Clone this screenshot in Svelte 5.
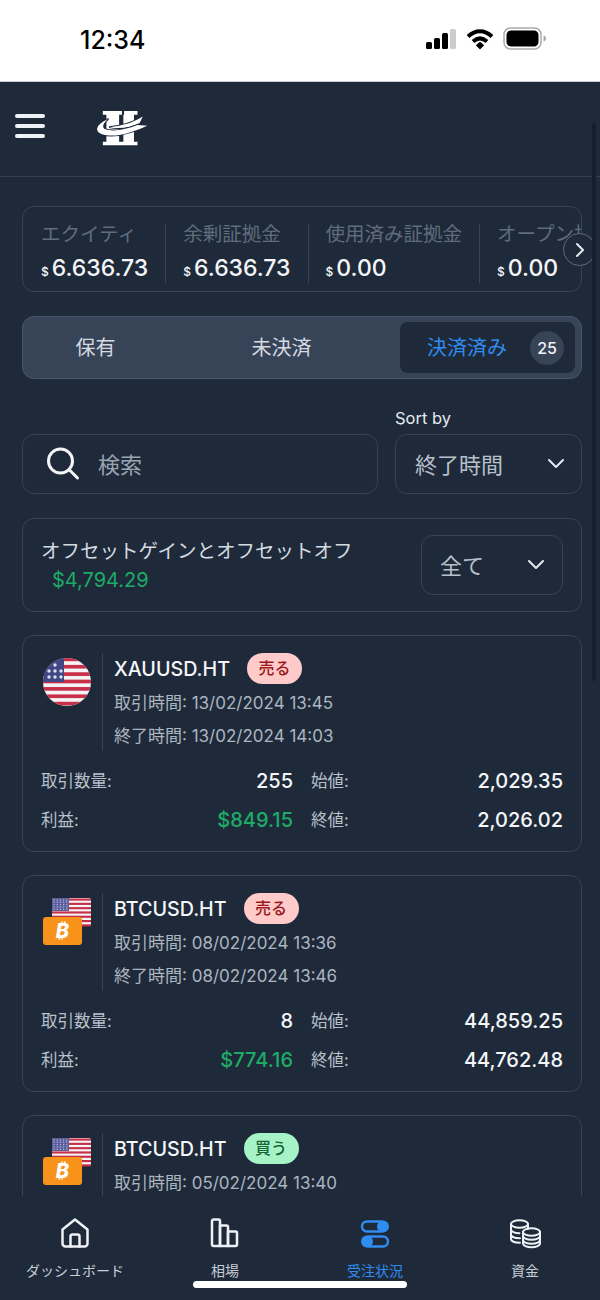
<script>
  const stats = [
    { label: 'エクイティ', value: '6.636.73' },
    { label: '余剰証拠金', value: '6.636.73' },
    { label: '使用済み証拠金', value: '0.00' },
    { label: 'オープン損益', value: '0.00' }
  ];
  const orders = [
    { sym: 'XAUUSD.HT', side: '売る', sell: true, flag: 'us', open: '13/02/2024 13:45', close: '13/02/2024 14:03', qty: '255', profit: '$849.15', o: '2,029.35', c: '2,026.02' },
    { sym: 'BTCUSD.HT', side: '売る', sell: true, flag: 'btc', open: '08/02/2024 13:36', close: '08/02/2024 13:46', qty: '8', profit: '$774.16', o: '44,859.25', c: '44,762.48' },
    { sym: 'BTCUSD.HT', side: '買う', sell: false, flag: 'btc', open: '05/02/2024 13:40', close: '05/02/2024 13:52', qty: '8', profit: '$700.10', o: '42,859.25', c: '42,762.48' }
  ];
  const stripes = [0, 1, 2, 3, 4, 5, 6];
  const stars = [[6, 13], [12, 7], [18, 13], [6, 19], [12, 19], [18, 19], [12, 13]];
  const dots = [0, 1, 2, 3, 4];
  const navs = [
    { label: 'ダッシュボード', icon: 'home' },
    { label: '相場', icon: 'bars' },
    { label: '受注状況', icon: 'toggle', active: true },
    { label: '資金', icon: 'coins' }
  ];
</script>

<div class="phone">
  <div class="status">
    <span class="time">12:34</span>
    <div class="status-icons">
      <svg width="32" height="20" viewBox="0 0 32 20">
        <rect x="1" y="13" width="6" height="7" rx="1.500" fill="#000" />
        <rect x="9" y="9" width="6" height="11" rx="1.500" fill="#000" />
        <rect x="17" y="4" width="6" height="16" rx="1.500" fill="#000" />
        <rect x="25" y="0" width="6" height="20" rx="1.500" fill="#ccc" />
      </svg>
      <svg width="28" height="22" viewBox="0 0 28 22">
        <path d="M2 8.500C9.500 1.500 18.500 1.500 26 8.500" fill="none" stroke="#000" stroke-width="4" />
        <path d="M7 13.500C11.500 9.500 16.500 9.500 21 13.500" fill="none" stroke="#000" stroke-width="4" />
        <path d="M9.800 17.200 14 13.800 18.200 17.200 14 21.500Z" fill="#000" />
      </svg>
      <svg width="44" height="24" viewBox="0 0 44 24">
        <rect x="1" y="1" width="37" height="21" rx="6.500" fill="none" stroke="#aaa" stroke-width="1.500" />
        <rect x="3.500" y="3.500" width="32" height="16" rx="4.500" fill="#000" />
        <path d="M40.500 8.500c2 .5 2.500 2 2.500 3s-.5 2.500-2.500 3Z" fill="#aaa" />
      </svg>
    </div>
  </div>

  <header class="topbar">
    <button class="burger" aria-label="menu"><i></i><i></i><i></i></button>
    <svg class="logo" width="70" height="51" viewBox="0 0 198 144" aria-label="logo">
      <path fill="#fff" d="M42 28H96V39H88V115H97V125H42V115H52V39H42ZM102 28H140V39H130V115H140V125H90V115H100V39H102Z" />
      <path fill="#fff" stroke="#1e2a3a" stroke-width="5" paint-order="stroke" d="M155 44C130 60 100 70 60 74 92 80 122 74 146 62Z" />
      <path fill="#fff" stroke="#1e2a3a" stroke-width="5" paint-order="stroke" d="M58 50C34 60 20 76 28 86 40 102 85 100 120 88 140 82 155 76 168 70L140 68C110 80 70 88 50 80 38 76 42 62 58 50Z" />
    </svg>
  </header>

  <main class="content">
    <section class="stats">
      <div class="stats-row">
        {#each stats as s}
          <div class="stat">
            <div class="stat-label">{s.label}</div>
            <div class="stat-value"><small>$</small>{s.value}</div>
          </div>
        {/each}
      </div>
      <button class="next" aria-label="next">
        <svg width="12" height="16" viewBox="0 0 12 16"><path d="M3 2l6 6-6 6" fill="none" stroke="#e5e9ef" stroke-width="2" stroke-linecap="round" stroke-linejoin="round" /></svg>
      </button>
    </section>

    <nav class="tabs">
      <div class="tab">保有</div>
      <div class="tab">未決済</div>
      <div class="tab active"><span>決済済み</span><b>25</b></div>
    </nav>

    <div class="filters">
      <div class="search">
        <svg width="34" height="36" viewBox="0 0 34 36"><circle cx="14.500" cy="15" r="12" fill="none" stroke="#f3f5f7" stroke-width="3" /><path d="M23.500 24l8 8" stroke="#f3f5f7" stroke-width="3" stroke-linecap="round" /></svg>
        <span>検索</span>
      </div>
      <div class="sort">
        <label for="sort-box">Sort by</label>
        <div class="select" id="sort-box">
          <span>終了時間</span>
          <svg width="18" height="12" viewBox="0 0 18 12"><path d="M2 2l7 7 7-7" fill="none" stroke="#e5e9ef" stroke-width="2" stroke-linecap="round" stroke-linejoin="round" /></svg>
        </div>
      </div>
    </div>

    <section class="offset">
      <div class="offset-text">
        <div class="offset-label">オフセットゲインとオフセットオフ</div>
        <div class="offset-value">$4,794.29</div>
      </div>
      <div class="select small">
        <span>全て</span>
        <svg width="18" height="12" viewBox="0 0 18 12"><path d="M2 2l7 7 7-7" fill="none" stroke="#e5e9ef" stroke-width="2" stroke-linecap="round" stroke-linejoin="round" /></svg>
      </div>
    </section>

    {#each orders as o}
      <article class="card">
        <div class="card-head">
          <div class="flag">
            {#if o.flag === 'us'}
              <svg width="48" height="48" viewBox="0 0 48 48">
                <defs><clipPath id="round"><circle cx="24" cy="24" r="24" /></clipPath></defs>
                <g clip-path="url(#round)">
                  <rect width="48" height="48" fill="#f4f4f6" />
                  {#each stripes as i}<rect y={i * 7.380 - 0.500} width="48" height="3.700" fill="#c8304a" />{/each}
                  <rect width="21" height="24" fill="#3f4785" />
                  <g fill="#dfe0ee">
                    {#each stars as p}<circle cx={p[0]} cy={p[1]} r="1.700" />{/each}
                  </g>
                </g>
              </svg>
            {:else}
              <svg width="48" height="48" viewBox="0 0 48 48">
                <rect x="9" y="0" width="39" height="28" rx="2" fill="#f4f4f6" />
                {#each stripes as i}<rect x="9" y={i * 4.300 + 0.500} width="39" height="2.150" fill="#c8304a" />{/each}
                <rect x="9" y="0" width="17" height="13" fill="#5a5f9c" />
                <g fill="#b9bbdc">
                  {#each dots as d}{#each dots as e}<circle cx={11 + d * 3.200} cy={2 + e * 2.300} r="0.700" />{/each}{/each}
                </g>
                <rect x="0" y="19" width="39" height="28" rx="3" fill="#f7931a" />
                <text x="19.500" y="40" text-anchor="middle" font-family="Inter" font-style="italic" font-weight="800" font-size="20" fill="#fff">₿</text>
              </svg>
            {/if}
          </div>
          <div class="info">
            <div class="title"><span>{o.sym}</span><em class:sell={o.sell}>{o.side}</em></div>
            <div class="line">取引時間: {o.open}</div>
            <div class="line">終了時間: {o.close}</div>
          </div>
        </div>
        <div class="grid">
          <span class="k">取引数量:</span><span class="v">{o.qty}</span><span class="k">始値:</span><span class="v">{o.o}</span>
          <span class="k">利益:</span><span class="v green">{o.profit}</span><span class="k">終値:</span><span class="v">{o.c}</span>
        </div>
      </article>
    {/each}
  </main>

  <footer class="bottom">
    {#each navs as n}
      <div class="nav" class:on={n.active}>
        <svg width="34" height="34" viewBox="0 0 34 34" fill="none" stroke="currentColor" stroke-width="2.500" stroke-linecap="round" stroke-linejoin="round">
          {#if n.icon === 'home'}
            <path d="M4.500 13.500 17 3.500l12.500 10v14a3 3 0 0 1-3 3h-19a3 3 0 0 1-3-3Z" />
            <path d="M12.500 30.500V20.500a2 2 0 0 1 2-2h5a2 2 0 0 1 2 2v10" />
          {:else if n.icon === 'bars'}
            <path d="M4 5a1.500 1.500 0 0 1 1.500-1.500h5A1.500 1.500 0 0 1 12 5v25H5.500A1.500 1.500 0 0 1 4 28.500Z" />
            <path d="M12 9.500h6.500A1.500 1.500 0 0 1 20 11v19h-8Z" />
            <path d="M20 15.500h7.500A1.500 1.500 0 0 1 29 17v11.500a1.500 1.500 0 0 1-1.500 1.500H20Z" />
          {:else if n.icon === 'toggle'}
            <g stroke="#2f8cf0" stroke-width="2.400">
              <rect x="4" y="5.500" width="24" height="10" rx="5" />
              <rect x="6" y="20.500" width="24" height="10" rx="5" />
            </g>
            <circle cx="25" cy="10.500" r="6" fill="#2f8cf0" stroke="none" />
            <circle cx="9" cy="25.500" r="6" fill="#2f8cf0" stroke="none" />
          {:else}
            <g stroke-width="2">
              <ellipse cx="11.500" cy="8" rx="8.500" ry="3.800" />
              <path d="M3 8v15c0 2 3.500 3.700 9 3.700M3 13.500c0 2 3.500 3.700 8.500 3.700M3 18.500c0 2 3.500 3.700 9 3.700M20 8v5" />
              <ellipse cx="23.500" cy="16" rx="8.500" ry="3.800" />
              <path d="M15 16v11.500c0 2 3.500 3.700 8.500 3.700S32 29.500 32 27.500V16M15 20c0 2 3.500 3.700 8.500 3.700S32 22 32 20M15 24c0 2 3.500 3.700 8.500 3.700S32 26 32 24" />
            </g>
          {/if}
        </svg>
        <span>{n.label}</span>
      </div>
    {/each}
    <div class="indicator"></div>
  </footer>

  <div class="scrollbar"></div>
</div>

<style>
  :global(body) { margin: 0; background: #1e2a3a; }
  * { box-sizing: border-box; }
  .phone {
    position: relative;
    width: 600px;
    height: 1300px;
    overflow: hidden;
    display: flex;
    flex-direction: column;
    background: #1e2a3a;
    color: #fff;
    font-family: Inter, "Noto Sans CJK JP", sans-serif;
  }
  .status {
    flex: none;
    height: 82px;
    background: #fff;
    display: flex;
    align-items: center;
    justify-content: space-between;
    padding: 0 53px 0 80px;
    border-bottom: 1px solid #c9ced6;
  }
  .time { color: #000; font-size: 25px; font-weight: 500; margin-top: -2px; }
  .status-icons { display: flex; align-items: center; gap: 9px; margin-top: -3px; }
  .topbar {
    flex: none;
    height: 95px;
    border-bottom: 1px solid #344052;
    display: flex;
    align-items: center;
    padding: 0 0 6px 15px;
    gap: 43px;
  }
  .burger { background: none; border: 0; padding: 0; width: 30px; display: flex; flex-direction: column; gap: 5.500px; }
  .burger i { display: block; height: 4.500px; border-radius: 3px; background: #eef1f5; }
  .content {
    flex: 1;
    min-height: 0;
    overflow: hidden;
    padding: 29px 18px 0 22px;
    display: flex;
    flex-direction: column;
  }
  .stats {
    position: relative;
    flex: none;
    height: 86px;
    border: 1px solid #374455;
    border-radius: 12px;
  }
  .stats-row { display: flex; height: 100%; overflow: hidden; padding: 17px 0 0 18px; border-radius: 12px; }
  .stat { flex: none; height: 59px; padding-right: 17px; margin-right: 17px; border-right: 1px solid #374455; }
  .stat:last-child { border: 0; margin: 0; padding: 0; }
  .stat-label { font-size: 19.500px; line-height: 21px; color: #5f6c7e; white-space: nowrap; }
  .stat-value { font-size: 23px; line-height: 28px; margin-top: 9px; font-weight: 500; color: #f4f6f8; white-space: nowrap; }
  .stat-value small { font-size: 12px; margin-right: 3px; }
  .next {
    position: absolute;
    right: -15px;
    top: 26px;
    width: 33px;
    height: 33px;
    border-radius: 50%;
    border: 1px solid #5f6c7e;
    background: #1e2a3a;
    display: flex;
    align-items: center;
    justify-content: center;
    padding: 0;
  }
  .tabs {
    flex: none;
    margin-top: 24px;
    height: 63px;
    background: #374457;
    border: 1px solid #4a586b;
    border-radius: 12px;
    padding: 5px 6px 5px 5px;
    display: grid;
    grid-template-columns: 135px 1fr 175px;
    font-size: 20px;
    color: #d5dae1;
  }
  .tab { display: flex; align-items: center; justify-content: center; padding-bottom: 3px; }
  .tab.active { background: #1e2a3a; border-radius: 8px; color: #2f8cf0; justify-content: flex-start; padding: 0 11px 3px 27px; }
  .tab.active span { flex: 1; }
  .tab.active b { width: 34px; height: 34px; margin-top: 3px; border-radius: 50%; background: #374457; color: #eef1f5; font-size: 16px; font-weight: 500; display: flex; align-items: center; justify-content: center; }
  .filters { flex: none; display: flex; align-items: flex-end; gap: 17px; margin-top: 29px; }
  .search {
    width: 356px;
    height: 60px;
    border: 1px solid #374455;
    border-radius: 12px;
    display: flex;
    align-items: center;
    gap: 18px;
    padding-left: 23px;
    font-size: 22px;
    color: #9aa4b1;
  }
  .search span { margin-bottom: 3px; }
  .sort { flex: 1; }
  .sort label { display: block; font-size: 16.500px; line-height: 20px; margin-bottom: 6px; color: #e5e9ef; }
  .select {
    height: 60px;
    border: 1px solid #374455;
    border-radius: 12px;
    display: flex;
    align-items: center;
    justify-content: space-between;
    padding: 0 16px 0 19px;
    font-size: 22px;
    color: #b8c0cb;
  }
  .select span { margin-bottom: 3px; }
  .offset {
    flex: none;
    margin-top: 24px;
    height: 94px;
    border: 1px solid #374455;
    border-radius: 12px;
    display: flex;
    align-items: center;
    justify-content: space-between;
    padding: 0 18px;
  }
  .offset-label { font-size: 19.500px; line-height: 24px; color: #d5dae1; }
  .offset-value { font-size: 20px; line-height: 24px; margin: 5px 0 0 11px; color: #1dac68; }
  .select.small { width: 142px; padding: 0 17px 0 18px; }
  .card {
    flex: none;
    height: 217px;
    margin-top: 23px;
    border: 1px solid #374455;
    border-radius: 12px;
    padding: 17px 18px 0;
  }
  .card-head { display: flex; height: 98px; }
  .flag { flex: none; width: 62px; border-right: 1px solid #374455; padding: 5px 0 0 2px; margin-right: 11px; height: 98px; }
  .title { display: flex; align-items: center; gap: 17px; height: 31px; font-size: 19.700px; font-weight: 500; color: #f4f6f8; }
  .title em { font-style: normal; font-size: 16px; font-weight: 500; width: 55px; height: 31px; padding-bottom: 3px; border-radius: 16px; background: #a7f3c8; color: #166534; display: flex; align-items: center; justify-content: center; }
  .title em.sell { background: #fecaca; color: #991b1b; }
  .line { font-size: 17px; line-height: 33px; color: #adb5c0; white-space: nowrap; }
  .line:nth-child(2) { margin-top: 3px; }
  .grid {
    display: grid;
    grid-template-columns: 80px 172px 76px 1fr;
    margin-top: 10px;
    grid-auto-rows: 39px;
    align-items: center;
  }
  .k { font-size: 16.500px; color: #b8c0cb; padding-bottom: 2px; }
  .k:nth-child(3), .k:nth-child(7) { padding-left: 18px; }
  .v { font-size: 20px; font-weight: 500; color: #f4f6f8; text-align: right; }
  .green { color: #1dac68; }
  .bottom {
    position: relative;
    flex: none;
    height: 104px;
    background: #1e2a3a;
    display: grid;
    grid-template-columns: repeat(4, 1fr);
    padding-top: 20px;
  }
  .nav { display: flex; flex-direction: column; align-items: center; color: #eef1f5; height: 70px; gap: 11px; }
  .nav span { font-size: 14px; line-height: 20px; color: #c8ced6; }
  .nav.on span { color: #2f8cf0; }
  .indicator { position: absolute; left: 193px; top: 85px; width: 214px; height: 7px; border-radius: 4px; background: #fff; }
  .scrollbar { position: absolute; left: 592px; top: 123px; width: 4px; height: 558px; border-radius: 2px; background: #151e2b; }
</style>
